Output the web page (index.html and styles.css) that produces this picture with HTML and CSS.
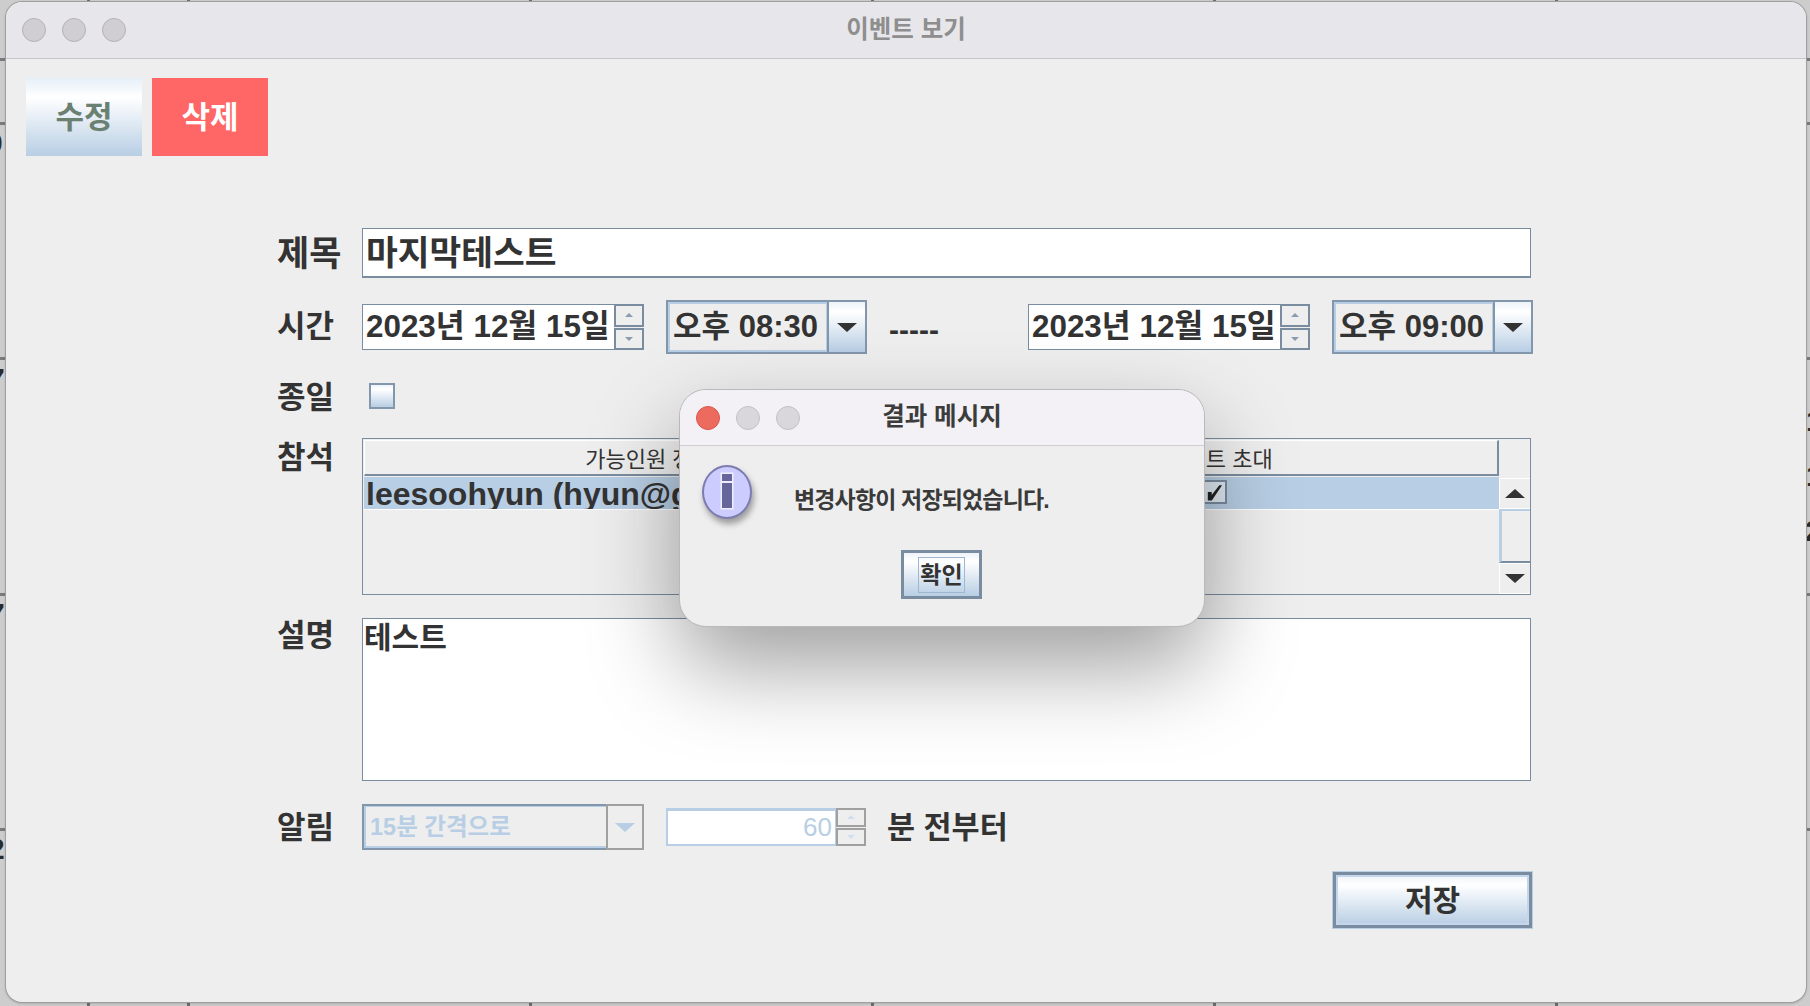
FILE: index.html
```html
<!DOCTYPE html>
<html lang="ko">
<head>
  <meta charset="UTF-8"/>
  <title>이벤트 보기</title>
  <link rel="stylesheet" href="styles.css">
</head>
<body>
<!-- calendar window lying behind, only its edges show -->
<div class="behind">
  <span class="day day-l1">0</span>
  <span class="day day-l2">7</span>
  <span class="day day-l3">7</span>
  <span class="day day-l4">2</span>
  <span class="day day-r1">1</span>
  <span class="day day-r2">1</span>
  <span class="day day-r3">2</span>
</div>

<div class="window">
  <header class="titlebar">
    <div class="lights">
      <span class="light"></span><span class="light"></span><span class="light"></span>
    </div>
    <span class="window-title">이벤트 보기</span>
  </header>

  <div class="toolbar">
    <button class="tool-btn edit">수정</button>
    <button class="tool-btn delete">삭제</button>
  </div>

  <form class="form">
    <div class="row row-title">
      <label class="label">제목</label>
      <div class="title-field">마지막테스트</div>
    </div>

    <div class="row row-time">
      <label class="label">시간</label>
      <div class="spinner date">
        <div class="spin-text">2023년 12월 15일</div>
        <div class="spin-btns">
          <span class="spin-btn"><i class="tri up"></i></span>
          <span class="spin-btn"><i class="tri down"></i></span>
        </div>
      </div>
      <div class="combo">
        <div class="combo-text">오후 08:30</div>
        <div class="combo-arrow"><i class="tri big down"></i></div>
      </div>
      <span class="dash">-----</span>
      <div class="spinner date">
        <div class="spin-text">2023년 12월 15일</div>
        <div class="spin-btns">
          <span class="spin-btn"><i class="tri up"></i></span>
          <span class="spin-btn"><i class="tri down"></i></span>
        </div>
      </div>
      <div class="combo">
        <div class="combo-text">오후 09:00</div>
        <div class="combo-arrow"><i class="tri big down"></i></div>
      </div>
    </div>

    <div class="row row-allday">
      <label class="label">종일</label>
      <span class="checkbox"></span>
    </div>

    <div class="row row-people">
      <label class="label">참석</label>
      <div class="table">
        <div class="table-main">
          <div class="table-head">
            <span class="col-name">가능인원 정보</span>
            <span class="col-invite">이벤트 초대</span>
          </div>
          <div class="table-row">
            <span class="col-name">leesoohyun (hyun@gmail.com)</span>
            <span class="col-invite"><span class="cell-check">
              <svg viewBox="0 0 14 14" width="17" height="17"><path d="M1.5 6.5h3.2v2.6L11 1h2.2L4.8 13.5H1.5z" fill="#222"/></svg>
            </span></span>
          </div>
        </div>
        <div class="scrollbar">
          <div class="scroll-btn"><i class="tri big up"></i></div>
          <div class="scroll-thumb"></div>
          <div class="scroll-btn"><i class="tri big down"></i></div>
        </div>
      </div>
    </div>

    <div class="row row-desc">
      <label class="label">설명</label>
      <div class="textarea">테스트</div>
    </div>

    <div class="row row-alarm">
      <label class="label">알림</label>
      <div class="combo off">
        <div class="combo-text">15분 간격으로</div>
        <div class="combo-arrow"><i class="tri big down"></i></div>
      </div>
      <div class="spinner off">
        <div class="spin-text">60</div>
        <div class="spin-btns">
          <span class="spin-btn"><i class="tri up"></i></span>
          <span class="spin-btn"><i class="tri down"></i></span>
        </div>
      </div>
      <span class="unit">분 전부터</span>
    </div>

    <div class="row row-save">
      <button class="save-btn">저장</button>
    </div>
  </form>
</div>

<!-- result dialog -->
<div class="dialog">
  <header class="dialog-bar">
    <div class="lights">
      <span class="light red"></span><span class="light"></span><span class="light"></span>
    </div>
    <span class="dialog-title">결과 메시지</span>
  </header>
  <div class="dialog-body">
    <div class="info-icon"><span class="info-dot"></span><span class="info-stem"></span></div>
    <p class="dialog-msg">변경사항이 저장되었습니다.</p>
  </div>
  <div class="dialog-foot">
    <button class="ok-btn"><span class="ok-focus">확인</span></button>
  </div>
</div>
</body>
</html>
```

FILE: styles.css
```css
* {
    box-sizing: border-box;
}

body {
    margin: 0;
    width: 1810px;
    height: 1006px;
    overflow: hidden;
    position: relative;
    background-color: #cdcdcd;
    background-image:
        repeating-linear-gradient(90deg, #6e6e6e 0 3px, transparent 3px 342px),
        repeating-linear-gradient(180deg, #7a7a7a 0 3px, transparent 3px 235.4px);
    background-position: 187px 0, 0 122px;
    font-family: "Liberation Sans", "Noto Sans CJK KR", sans-serif;
    color: #333;
}

button {
    font-family: inherit;
    padding: 0;
}

/* bits of the calendar behind */
.behind {
    position: absolute;
    inset: 0;
    overflow: hidden;
}

.day {
    position: absolute;
    font-size: 30px;
    font-weight: 700;
    line-height: 34px;
    color: #2b2b2b;
}

.day-l1 { left: -14px; top: 126px; }
.day-l2 { left: -12px; top: 362px; }
.day-l3 { left: -12px; top: 597px; }
.day-l4 { left: -12px; top: 832px; }
.day-r1 { left: 1806px; top: 404px; }
.day-r2 { left: 1806px; top: 459px; }
.day-r3 { left: 1805px; top: 514px; }

/* main window */
.window {
    position: absolute;
    left: 6px;
    top: 2px;
    width: 1800px;
    height: 1000px;
    background: #eeeeee;
    border-radius: 16px;
    box-shadow: 0 0 0 1px #9f9f9f, 0 1px 3px rgba(0, 0, 0, 0.3);
    overflow: hidden;
}

.titlebar {
    height: 57px;
    background: #e7e6ea;
    border-bottom: 1px solid #c6c5c9;
    display: flex;
    align-items: center;
    justify-content: center;
    position: relative;
}

.lights {
    position: absolute;
    left: 16px;
    top: 16px;
    display: flex;
    gap: 16px;
}

.light {
    width: 24px;
    height: 24px;
    border-radius: 50%;
    background: #d0ced3;
    border: 1px solid #b3b1b6;
}

.window-title {
    font-size: 24.5px;
    font-weight: 700;
    color: #8e8e8e;
    margin-top: -6px;
}

.toolbar {
    display: flex;
    gap: 10px;
    padding: 19px 0 0 20px;
}

.tool-btn {
    width: 116px;
    height: 78px;
    border: 0;
    padding-bottom: 6px;
    font-size: 31px;
    font-weight: 700;
}

.edit {
    color: #6a8070;
    background: linear-gradient(#e6eff8, #ffffff 25%, #b8cee4);
}

.delete {
    color: #fff;
    background: #ff6666;
}

/* form */
.form {
    padding: 72px 0 0 271px;
    width: 1525px;
}

.row {
    display: flex;
    align-items: flex-start;
}

.label {
    width: 85px;
    flex: none;
    font-size: 31px;
    font-weight: 700;
    line-height: 50px;
}

.row-title { height: 50px; }
.row-time { height: 54px; margin-top: 22px; }
.row-allday { height: 40px; margin-top: 22px; }
.row-people { height: 157px; margin-top: 22px; }
.row-desc { height: 163px; margin-top: 23px; }
.row-alarm { height: 46px; margin-top: 23px; }
.row-save { height: 56px; margin-top: 22px; justify-content: flex-end; margin-right: -1px; }

.row-title .label {
    font-size: 35px;
    line-height: 51px;
    white-space: nowrap;
}

.title-field {
    flex: 1;
    height: 50px;
    background: #fff;
    border: 1px solid #7a8ca0;
    border-bottom-width: 2px;
    padding-left: 3px;
    font-size: 34.5px;
    font-weight: 700;
    line-height: 48px;
    white-space: nowrap;
}

.row-time {
    margin-right: -2px;
}

.row-time .label {
    line-height: 54px;
}

.spinner {
    display: flex;
    align-items: stretch;
    flex: none;
}

.date {
    width: 282px;
    height: 46px;
    margin-top: 4px;
}

.spin-text {
    flex: 1;
    background: #fff;
    border: 1px solid #7a8ca0;
    border-right: 0;
    padding-left: 3px;
    font-size: 31.4px;
    font-weight: 700;
    line-height: 44px;
    white-space: nowrap;
}

.spin-btns {
    width: 30px;
    flex: none;
    display: flex;
    flex-direction: column;
    gap: 1px;
}

.spin-btn {
    flex: 1;
    border: 2px solid #7a8ca0;
    background: #eeeeee;
    display: flex;
    align-items: center;
    justify-content: center;
}

.tri {
    display: block;
    width: 0;
    height: 0;
    border-left: 4px solid transparent;
    border-right: 4px solid transparent;
}

.tri.up { border-bottom: 4px solid #8a9cb0; }
.tri.down { border-top: 4px solid #8a9cb0; }

.tri.big {
    border-left-width: 10px;
    border-right-width: 10px;
}

.tri.big.up { border-bottom: 9px solid #333; }
.tri.big.down { border-top: 9px solid #333; }

.combo {
    flex: none;
    width: 201px;
    height: 54px;
    margin-left: 22px;
    display: flex;
    border: 2px solid #8296ac;
}

.combo-text {
    flex: 1;
    border: 2px solid #b8cee4;
    border-right-width: 1px;
    padding-left: 3px;
    font-size: 31px;
    font-weight: 700;
    line-height: 46px;
    white-space: nowrap;
}

.combo-arrow {
    width: 38px;
    flex: none;
    border-left: 2px solid #8296ac;
    background: linear-gradient(#eef3f9, #ffffff 20%, #b8cee4);
    display: flex;
    align-items: center;
    justify-content: center;
}

.dash {
    width: 161px;
    flex: none;
    padding: 11px 0 0 22px;
    font-size: 30px;
    font-weight: 700;
    line-height: 38px;
}

.row-allday .label {
    line-height: 44px;
}

.checkbox {
    width: 26px;
    height: 26px;
    margin: 7px 0 0 7px;
    border: 2px solid #8296ac;
    background: linear-gradient(#eef3f9, #ffffff 20%, #b8cee4);
}

.row-people .label {
    line-height: 40px;
}

.table {
    flex: 1;
    height: 157px;
    display: flex;
    border: 1px solid #7a8ca0;
    background: #eeeeee;
}

.table-main {
    flex: 1;
    padding: 1px 0 0 1px;
}

.table-head {
    height: 36px;
    display: flex;
    border-bottom: 2px solid #7a8ca0;
    border-right: 2px solid #7a8ca0;
    border-top: 1px solid #fff;
    border-left: 1px solid #fff;
    font-size: 22px;
    line-height: 38px;
}

.col-name {
    width: 576px;
    flex: none;
    text-align: center;
    white-space: nowrap;
    overflow: hidden;
}

.table-head .col-name {
    padding-right: 8px;
}

.col-invite {
    flex: 1;
    text-align: center;
}

.table-row {
    height: 33px;
    margin-top: 1px;
    display: flex;
    background: #b8cee4;
    border-bottom: 1px solid #fff;
    font-size: 32px;
    font-weight: 700;
    line-height: 34px;
}

.table-row .col-name {
    text-align: left;
    padding-left: 2px;
}

.cell-check {
    display: inline-flex;
    align-items: center;
    justify-content: center;
    width: 24px;
    height: 24px;
    margin: 3px 10px 0 0;
    border: 2px solid #7a8ca0;
    background: #dfe8f2;
    vertical-align: top;
}

.scrollbar {
    width: 31px;
    flex: none;
    display: flex;
    flex-direction: column;
    padding-top: 39px;
}

.scroll-btn {
    height: 31px;
    background: #eeeeee;
    border: 1px solid #fff;
    border-right: 0;
    display: flex;
    align-items: center;
    justify-content: center;
    flex: none;
}

.scroll-thumb {
    flex: 1;
    border-top: 2px solid #b8cee4;
    border-left: 3px solid #b8cee4;
    border-bottom: 2px solid #7a8ca0;
    background: #eeeeee;
}

.textarea {
    flex: 1;
    height: 163px;
    background: #fff;
    border: 1px solid #7a8ca0;
    padding-left: 1px;
    font-size: 30px;
    font-weight: 700;
    line-height: 37px;
}

.row-desc .label {
    line-height: 36px;
}

.row-alarm .label {
    line-height: 48px;
}

.combo.off {
    width: 282px;
    height: 46px;
    margin-left: 0;
    border: 2px solid #8296ac;
    border-right: 0;
}

.combo.off .combo-text {
    color: #b8cee4;
    font-size: 23.5px;
    line-height: 40px;
    padding-left: 4px;
    border-color: #b8cee4;
    border-right: 0;
    border-top-width: 1px;
}

.combo.off .combo-arrow {
    background: #eeeeee;
    border: 2px solid #a0a0a0;
    margin: -2px 0;
}

.combo.off .tri.big.down {
    border-top-color: #b8cee4;
}

.spinner.off {
    width: 200px;
    height: 38px;
    margin: 4px 0 0 22px;
}

.spinner.off .spin-text {
    color: #b8cee4;
    text-align: right;
    font-size: 26px;
    font-weight: 400;
    line-height: 32px;
    border: 2px solid #b8cee4;
    border-width: 3px 1px 2px 2px;
    padding-right: 3px;
}

.spinner.off .spin-btn {
    border-color: #a0a0a0;
}

.spinner.off .tri.up { border-bottom-color: #cfdff0; }
.spinner.off .tri.down { border-top-color: #cfdff0; }

.unit {
    font-size: 30.5px;
    font-weight: 700;
    line-height: 46px;
    margin-left: 21px;
    white-space: nowrap;
}

.save-btn {
    width: 199px;
    height: 56px;
    padding-bottom: 4px;
    border: 3px solid #7a8ca0;
    box-shadow: 0 0 0 1px #b8cee4, inset 0 0 0 2px #c4d6ea;
    background: linear-gradient(#eef3f9, #ffffff 20%, #b8cee4);
    color: #333;
    font-size: 30px;
    font-weight: 700;
}

/* result dialog */
.dialog {
    position: absolute;
    left: 680px;
    top: 390px;
    width: 524px;
    height: 236px;
    background: #eeeeee;
    border-radius: 26px;
    box-shadow: 0 0 0 1px #b9b9b9, 0 40px 90px rgba(0, 0, 0, 0.38);
    overflow: hidden;
}

.dialog-bar {
    height: 56px;
    background: #f3f1f5;
    border-bottom: 1px solid #cfcdd1;
    display: flex;
    align-items: center;
    justify-content: center;
    position: relative;
}

.dialog-bar .lights {
    left: 16px;
    top: 16px;
}

.light.red {
    background: #ed6a5e;
    border-color: #d9564a;
}

.dialog-bar .light:not(.red) {
    background: #d9d7dc;
    border-color: #c2c0c5;
}

.dialog-title {
    font-size: 24.5px;
    font-weight: 700;
    color: #3c3c3c;
    margin-top: -6px;
}

.dialog-body {
    display: flex;
    height: 94px;
    padding: 19px 0 0 22px;
}

.info-icon {
    width: 50px;
    height: 54px;
    border-radius: 50%;
    background: #ccccff;
    border: 2px solid #7c7cb0;
    box-shadow: 2px 5px 6px rgba(0, 0, 0, 0.35);
    display: flex;
    flex-direction: column;
    align-items: center;
    padding-top: 7px;
    gap: 2px;
    flex: none;
}

.info-dot {
    width: 10px;
    height: 7px;
    background: #66669a;
    box-shadow: 0 0 0 1.5px #eeeeff;
}

.info-stem {
    width: 10px;
    height: 25px;
    background: #66669a;
    box-shadow: 0 0 0 1.5px #eeeeff;
}

.dialog-msg {
    margin: 19px 0 0 42px;
    font-size: 23px;
    font-weight: 700;
    line-height: 32px;
    letter-spacing: -0.85px;
    color: #3a3a3a;
    white-space: nowrap;
}

.dialog-foot {
    display: flex;
    justify-content: flex-end;
    padding-right: 222px;
    margin-top: 10px;
}

.ok-btn {
    width: 81px;
    height: 49px;
    border: 3px solid #7a8ca0;
    background: linear-gradient(#eef3f9, #ffffff 20%, #b8cee4);
    display: flex;
    align-items: center;
    justify-content: center;
}

.ok-focus {
    border: 1px solid #a0b6ce;
    font-size: 23px;
    font-weight: 700;
    line-height: 33px;
    padding: 1px 1px 0;
    color: #333;
}
```
